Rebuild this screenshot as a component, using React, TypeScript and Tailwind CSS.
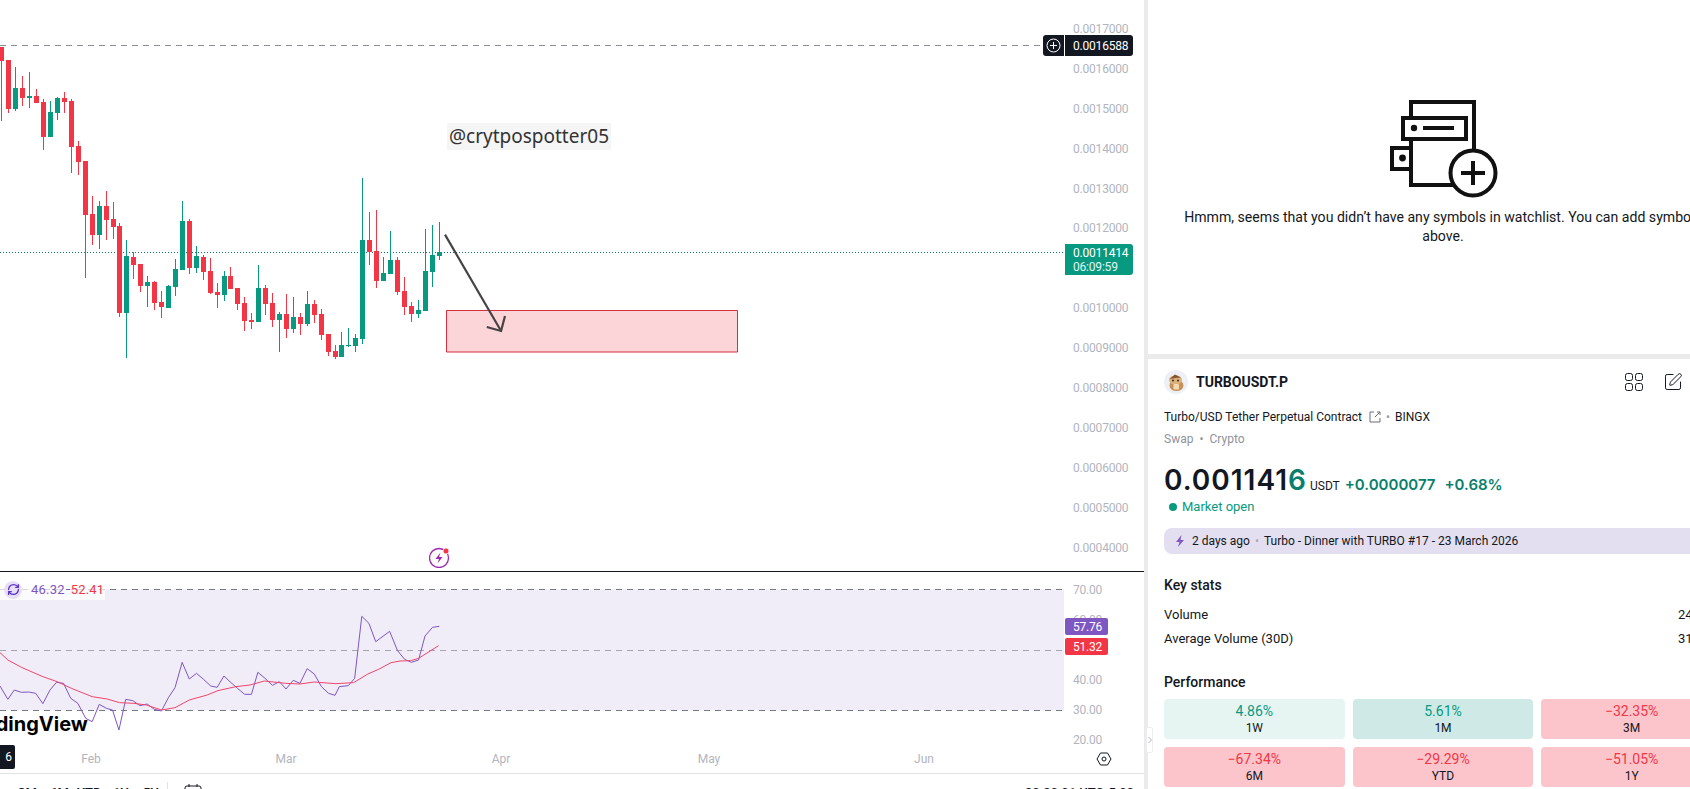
import React from 'react';
import { RefreshCw, SquarePen } from 'lucide-react';

// candles read off the chart: x, wick top, body top, body bottom, wick bottom, up?
const candles: [number, number, number, number, number, boolean][] = [
  [5, 140, 142, 182, 362, false], [24, 180, 180, 326, 338, false], [43, 202, 264, 326, 332, true],
  [63, 228, 264, 293, 318, false], [82, 216, 288, 293, 323, true], [102, 267, 288, 308, 308, false],
  [122, 296, 306, 410, 450, false], [141, 304, 336, 410, 412, true], [161, 292, 294, 338, 360, true],
  [180, 276, 294, 306, 338, false], [200, 296, 302, 440, 519, false], [220, 424, 438, 486, 525, false],
  [239, 482, 482, 644, 834, false], [259, 588, 642, 705, 735, false], [278, 604, 618, 705, 746, true],
  [298, 574, 618, 660, 720, false], [318, 606, 657, 680, 716, false], [335, 668, 678, 938, 950, false],
  [354, 720, 768, 938, 1074, true], [374, 757, 771, 795, 836, false], [393, 792, 792, 858, 876, false],
  [413, 828, 846, 858, 920, true], [433, 844, 846, 908, 930, false], [452, 873, 906, 921, 954, false],
  [472, 854, 858, 924, 924, true], [491, 778, 807, 860, 888, true], [511, 603, 663, 810, 810, true],
  [531, 658, 663, 804, 822, false], [550, 738, 768, 804, 818, true], [570, 766, 771, 816, 840, false],
  [589, 773, 813, 879, 882, false], [609, 850, 876, 885, 924, false], [629, 813, 828, 885, 903, true],
  [645, 800, 828, 866, 866, false], [665, 864, 864, 912, 930, false], [685, 892, 909, 963, 993, false],
  [704, 938, 960, 966, 987, false], [724, 796, 864, 966, 966, true], [743, 856, 864, 912, 945, false],
  [763, 880, 909, 960, 981, false], [783, 936, 942, 960, 1056, true], [802, 882, 942, 987, 1014, false],
  [822, 891, 951, 987, 1000, true], [841, 938, 951, 972, 1005, false], [861, 873, 912, 972, 978, true],
  [881, 900, 912, 945, 968, false], [900, 928, 942, 1005, 1020, false], [920, 1002, 1002, 1056, 1068, false],
  [939, 1035, 1053, 1071, 1076, false], [956, 996, 1035, 1071, 1071, true], [975, 984, 1035, 1038, 1040, true],
  [995, 1002, 1014, 1038, 1056, true], [1015, 534, 720, 1017, 1032, true], [1035, 636, 720, 756, 795, false],
  [1054, 630, 753, 843, 864, false], [1074, 771, 819, 843, 843, true], [1093, 693, 780, 822, 822, true],
  [1113, 771, 780, 876, 885, false], [1133, 831, 873, 921, 945, false], [1152, 906, 918, 942, 966, false],
  [1172, 900, 930, 942, 954, true], [1191, 687, 813, 933, 933, true], [1211, 675, 765, 816, 861, true],
  [1231, 666, 756, 768, 780, true],
];

const rsiLine =
  '0,438 22,478 40,450 60,457 80,456 100,460 120,491 140,450 158,427 178,430 198,475 218,490 240,535 258,545 278,493 298,505 315,510 333,570 352,478 372,482 392,497 412,492 432,508 452,513 472,472 490,443 510,367 530,417 550,400 570,418 590,438 608,442 627,408 647,428 665,445 685,463 704,463 722,397 742,415 763,436 782,425 801,447 821,421 840,430 860,386 880,402 900,440 920,460 938,466 950,440 975,437 993,415 1013,229 1033,250 1052,305 1091,274 1113,332 1133,358 1152,367 1172,360 1190,288 1211,262 1230,259';
const rsiMa =
  '0,338 22,360 60,382 120,410 160,425 200,445 258,470 300,477 335,488 375,490 410,495 452,510 490,503 530,480 580,465 610,452 660,440 700,435 740,423 800,430 840,432 880,426 940,431 990,428 1030,402 1060,388 1095,368 1120,363 1150,362 1172,355 1228,317';

const priceLabels = ['0.0017000', '0.0016000', '0.0015000', '0.0014000', '0.0013000', '0.0012000', '0.0011000', '0.0010000', '0.0009000', '0.0008000', '0.0007000', '0.0006000', '0.0005000', '0.0004000'];
const rsiLabels = ['70.00', '60.00', '50.00', '40.00', '30.00', '20.00'];
const months = [{ m: 'Feb', x: 91 }, { m: 'Mar', x: 286 }, { m: 'Apr', x: 501 }, { m: 'May', x: 709 }, { m: 'Jun', x: 924 }];

const perf = [
  { v: '4.86%', l: '1W', cls: 'bg-[#e6f5f2] text-[#089981]' },
  { v: '5.61%', l: '1M', cls: 'bg-[#cfeae6] text-[#089981]' },
  { v: '−32.35%', l: '3M', cls: 'bg-[#fcc5cc] text-[#f23645]' },
  { v: '−67.34%', l: '6M', cls: 'bg-[#fcc5cc] text-[#f23645]' },
  { v: '−29.29%', l: 'YTD', cls: 'bg-[#fcc5cc] text-[#f23645]' },
  { v: '−51.05%', l: '1Y', cls: 'bg-[#fcc5cc] text-[#f23645]' },
];

const PriceChart = () => (
  <svg className="block h-[571px] w-[1064px]" viewBox="0 0 2979.2 1713" preserveAspectRatio="none">
    <line x1="0" x2="2912" y1="136.5" y2="136.5" stroke="#8a8e99" strokeWidth="1" strokeDasharray="6 5" vectorEffect="non-scaling-stroke" />
    <line x1="0" x2="2979" y1="757.5" y2="757.5" stroke="#0a7f6c" strokeWidth="1" strokeDasharray="1 2" vectorEffect="non-scaling-stroke" />
    {candles.map(([x, wt, bt, bb, wb, up]) => (
      <g key={x} fill={up ? '#089981' : '#f23645'} shapeRendering="crispEdges">
        <rect x={x - 1.4} y={wt} width="2.8" height={wb - wt} />
        <rect x={x - 7} y={bt} width="14" height={bb - bt} />
      </g>
    ))}
    <rect x="1250.2" y="931.5" width="814.8" height="124.5" fill="#fbd5d8" stroke="#d32f3f" strokeWidth="1" vectorEffect="non-scaling-stroke" />
    <g fill="none" stroke="#474343" strokeWidth="2.2">
      <line x1="1246" y1="704" x2="1403" y2="993" vectorEffect="non-scaling-stroke" />
      <polyline points="1363,981 1403,993 1414,948" vectorEffect="non-scaling-stroke" />
    </g>
  </svg>
);

const RsiChart = () => (
  <svg className="block h-[174px] w-[1064px]" viewBox="0 96 2979.2 522" preserveAspectRatio="none">
    <rect x="0" y="148" width="2979.2" height="362" fill="#f0edf9" />
    {[148.5, 331.5, 511.5].map(y => (
      <line key={y} x1="0" x2="2979" y1={y} y2={y} stroke={y === 331.5 ? '#a6a6ad' : '#787b86'} strokeWidth="1" strokeDasharray="6 5" vectorEffect="non-scaling-stroke" />
    ))}
    <polyline points={rsiLine} fill="none" stroke="#7e57c2" strokeWidth="1" vectorEffect="non-scaling-stroke" />
    <polyline points={rsiMa} fill="none" stroke="#f0456a" strokeWidth="1" vectorEffect="non-scaling-stroke" />
  </svg>
);

const WatchlistIcon = () => (
  <svg width="110" height="100" viewBox="0 0 110 100" fill="none" stroke="#111" strokeWidth="4">
    <rect x="23" y="3" width="63" height="83" fill="#fff" />
    <rect x="15" y="19" width="63" height="21" fill="#fff" />
    <circle cx="26" cy="29" r="3.2" fill="#111" stroke="none" />
    <line x1="35" x2="66" y1="29" y2="29" />
    <rect x="4" y="49" width="19" height="21" fill="#fff" />
    <circle cx="14.5" cy="59" r="3.4" fill="#111" stroke="none" />
    <circle cx="85" cy="74" r="22.5" fill="#fff" />
    <line x1="73" x2="97" y1="74" y2="74" />
    <line x1="85" x2="85" y1="62" y2="86" />
  </svg>
);

const TurboLogo = () => (
  <svg width="24" height="24" viewBox="0 0 24 24">
    <circle cx="12" cy="12" r="12" fill="#eef0f6" />
    <ellipse cx="12.5" cy="15.5" rx="7" ry="5.5" fill="#c6925a" />
    <ellipse cx="11.5" cy="10" rx="6.5" ry="4.5" fill="#d9b27c" />
    <path d="M5.5 9 L11 4.5 L17 7.5 L11.5 8 Z" fill="#87552f" />
    <rect x="9.5" y="14" width="5.5" height="5.5" rx="1" fill="#f1d9b0" />
    <circle cx="9" cy="10.5" r="1" fill="#3b2a1a" />
    <circle cx="14" cy="10.5" r="1" fill="#3b2a1a" />
  </svg>
);

export default function App() {
  return (
    <div className="flex h-[789px] w-[1690px] overflow-hidden bg-white font-['Roboto',sans-serif] text-[#131722]">
      {/* chart column */}
      <div className="flex w-[1144px] shrink-0 flex-col">
        <div className="flex h-[571px]">
          <div className="relative w-[1064px] overflow-hidden">
            <PriceChart />
            <div className="absolute left-[447px] top-[123px] flex h-[27px] w-[164px] items-center justify-center bg-[#f5f5f5] font-['Noto_Sans',sans-serif] text-[19px] text-[#333]">
              @crytpospotter05
            </div>
            <div className="absolute left-[429px] top-[547px]">
              <svg width="21" height="21" viewBox="0 0 21 21" fill="none">
                <circle cx="10" cy="11" r="9.5" stroke="#9c27b0" strokeWidth="1.3" />
                <path d="M11.5 5.5 L6.5 12 H10 L8.5 16.5 L13.5 10 H10 Z" fill="#9c27b0" />
                <circle cx="17" cy="4" r="3" fill="#f23645" stroke="#fff" strokeWidth="0.8" />
              </svg>
            </div>
            <div className="absolute left-[1043px] top-[35px] flex h-[21px] w-[21px] items-center justify-center rounded-l-[3px] bg-[#131722]">
              <svg width="15" height="15" viewBox="0 0 15 15" fill="none" stroke="#fff">
                <circle cx="7.5" cy="7.5" r="6.5" />
                <path d="M7.5 4v7M4 7.5h7" />
              </svg>
            </div>
          </div>
          <div className="relative flex-1 pl-[9px] text-[12px] tracking-[-0.2px] text-[#b2b5be]">
            {priceLabels.map((p, i) => (
              <div key={p} className={`flex h-[39.9px] items-center leading-none ${i === 0 ? 'mt-[9px]' : ''}`}>{p}</div>
            ))}
            <div className="absolute left-[1px] top-[35px] flex h-[21px] w-[68px] items-center rounded-r-[3px] bg-[#131722] pl-[8px] text-white">0.0016588</div>
            <div className="absolute left-[1px] top-[244px] flex h-[31px] w-[68px] flex-col justify-center rounded-r-[3px] bg-[#089981] pl-[8px] leading-[14px] text-white">
              <span>0.0011414</span>
              <span className="text-[#e3f5f1]">06:09:59</span>
            </div>
          </div>
        </div>
        <div className="h-px bg-[#131722]" />
        <div className="flex h-[174px]">
          <div className="relative w-[1064px] overflow-hidden">
            <RsiChart />
            <div className="absolute left-0 top-[7px] flex h-[21px] w-[105px] items-center bg-white/70 pl-[4px] text-[13px] leading-none tracking-[0.2px]">
              <span className="flex h-[18px] w-[18px] items-center justify-center rounded-full bg-[#e6dff5]">
                <RefreshCw size={13} strokeWidth={2.5} className="text-[#5d36c9]" />
              </span>
              <span className="ml-[9px] text-[#7e57c2]">46.32</span>
              <span className="mx-[1px] h-px w-[4px] bg-[#7e57c2]" />
              <span className="text-[#f23645]">52.41</span>
            </div>
            <div className="absolute left-[-36px] top-[139px] font-['Inter',sans-serif] text-[20px] font-bold leading-[26px] text-black">TradingView</div>
          </div>
          <div className="relative flex-1 pl-[9px] pt-[3px] text-[12px] tracking-[-0.2px] text-[#b2b5be]">
            {rsiLabels.map(r => (
              <div key={r} className="flex h-[30px] items-center leading-none">{r}</div>
            ))}
            <div className="absolute left-[1px] top-[46px] flex h-[17px] w-[43px] items-center rounded-[2px] bg-[#7e57c2] pl-[8px] text-white">57.76</div>
            <div className="absolute left-[1px] top-[66px] flex h-[17px] w-[43px] items-center rounded-[2px] bg-[#f23645] pl-[8px] text-white">51.32</div>
          </div>
        </div>
        <div className="relative h-[27px] text-[12px] text-[#b2b5be]">
          {months.map(({ m, x }) => (
            <span key={m} className="absolute top-[5px] -translate-x-1/2 leading-[16px]" style={{ left: x }}>{m}</span>
          ))}
          <div className="absolute left-0 top-[-1px] flex h-[24px] w-[15px] items-center justify-end rounded-r-[2px] bg-[#131722] pr-[3px] text-white">6</div>
          <svg className="absolute left-[1096px] top-[5px]" width="16" height="16" viewBox="0 0 16 16" fill="none" stroke="#131722">
            <path d="M1 8 L4.5 2 H11.5 L15 8 L11.5 14 H4.5 Z" />
            <circle cx="8" cy="8" r="2" />
          </svg>
        </div>
        <div className="flex h-[16px] items-start justify-between overflow-hidden border-t border-[#e0e3eb] pt-[10px] text-[13px] font-medium leading-[18px]">
          <div className="flex items-start">
            <span className="ml-[18px] w-[32px]">3M</span>
            <span className="w-[27px]">6M</span>
            <span className="w-[36px]">YTD</span>
            <span className="w-[30px]">1Y</span>
            <span className="w-[24px]">5Y</span>
            <span className="mt-[-2px] h-[14px] border-l border-[#e0e3eb]" />
            <svg className="ml-[16px]" width="18" height="18" viewBox="0 0 18 18" fill="none" stroke="#131722">
              <rect x="1" y="2" width="16" height="15" rx="2" />
              <path d="M5 0v3M13 0v3" />
            </svg>
          </div>
          <span className="mr-[10px]">20:20:01 UTC-5:00</span>
        </div>
      </div>

      {/* right panel */}
      <div className="relative w-[546px] shrink-0 overflow-hidden border-l-[4px] border-[#ebebeb]">
        <div className="w-[590px]">
          <div className="flex h-[354px] flex-col items-center pt-[99px]">
            <WatchlistIcon />
            <p className="mt-[9px] w-[540px] text-center text-[14.1px] leading-[19px]">
              Hmmm, seems that you didn’t have any symbols in watchlist. You can add symbols above.
            </p>
          </div>
          <div className="h-[5px] bg-[#ebebeb]" />
          <div className="px-[16px]">
            <div className="mt-[11px] flex h-[24px] items-center">
              <TurboLogo />
              <span className="ml-[8px] text-[14px] font-bold">TURBOUSDT.P</span>
              <div className="ml-auto mr-[39px] flex items-center gap-[20px]">
                <svg width="18" height="18" viewBox="0 0 18 18" fill="none" stroke="#131722">
                  <rect x="0.5" y="0.5" width="7" height="7" rx="2" />
                  <rect x="10.5" y="0.5" width="7" height="7" rx="2" />
                  <rect x="0.5" y="10.5" width="7" height="7" rx="2" />
                  <rect x="10.5" y="10.5" width="7" height="7" rx="2" />
                </svg>
                <SquarePen size={20} strokeWidth={1.2} />
              </div>
            </div>
            <div className="mt-[14px] flex h-[18px] items-center text-[12px]">
              <span>Turbo/USD Tether Perpetual Contract</span>
              <svg className="ml-[7px]" width="12" height="12" viewBox="0 0 12 12" fill="none" stroke="#6a6d78">
                <path d="M5 1H1v10h10V7M6 6l5-5M8 1h3v3" />
              </svg>
              <span className="mx-[5px] text-[#9598a1]">•</span>
              <span>BINGX</span>
            </div>
            <div className="mt-[4px] flex h-[18px] items-center text-[12px] text-[#8f929b]">
              Swap <span className="mx-[6px]">•</span> Crypto
            </div>
            <div className="mt-[13px] flex h-[37px] items-baseline">
              <span className="font-['Inter',sans-serif] text-[28px] font-semibold leading-[38px] tracking-[1px]">
                0.001141<span className="text-[#0a7f6c]">6</span>
              </span>
              <span className="ml-[3px] text-[12px]">USDT</span>
              <span className="ml-[5px] font-['Inter',sans-serif] text-[15px] font-semibold text-[#0a7f6c]">+0.0000077</span>
              <span className="ml-[9px] font-['Inter',sans-serif] text-[15px] font-semibold text-[#0a7f6c]">+0.68%</span>
            </div>
            <div className="flex h-[18px] items-center text-[13px] text-[#089981]">
              <span className="ml-[5px] h-[8px] w-[8px] rounded-full bg-[#089981]" />
              <span className="ml-[5px]">Market open</span>
            </div>
            <div className="mt-[12px] flex h-[26px] items-center rounded-[8px] bg-[#e3dff0] pl-[11px] text-[12px]">
              <svg width="10" height="12" viewBox="0 0 10 12" fill="#7e57c2">
                <path d="M6.5 0 L1 7 H4.5 L3 12 L9 5 H5.5 Z" />
              </svg>
              <span className="ml-[7px]">2 days ago</span>
              <span className="mx-[5px] text-[#aaa]">•</span>
              <span>Turbo - Dinner with TURBO #17 - 23 March 2026</span>
            </div>
            <div className="mt-[21px] h-[20px] text-[14px] font-medium leading-[20px]">Key stats</div>
            <div className="mt-[7px] flex h-[25px] items-center justify-between text-[13px]">
              <span>Volume</span><span>246.1M</span>
            </div>
            <div className="flex h-[24px] items-center justify-between text-[13px]">
              <span>Average Volume (30D)</span><span>312.8M</span>
            </div>
            <div className="mt-[21px] h-[20px] text-[14px] font-medium leading-[20px]">Performance</div>
            <div className="mt-[7px] grid grid-cols-3 gap-[8px]">
              {perf.map(p => (
                <div key={p.l} className={`flex h-[40px] flex-col items-center justify-center rounded-[4px] ${p.cls}`}>
                  <span className="text-[14px] leading-[18px]">{p.v}</span>
                  <span className="text-[12px] leading-[16px] text-[#131722]">{p.l}</span>
                </div>
              ))}
            </div>
          </div>
        </div>
      </div>
      <div className="absolute left-[1146px] top-[727px] flex h-[26px] w-[7px] items-center justify-center rounded-[2px] border border-[#eee] bg-white">
        <svg width="4" height="8" viewBox="0 0 4 8" fill="none" stroke="#b2b5be"><path d="M0.5 1l3 3-3 3" /></svg>
      </div>
    </div>
  );
}
